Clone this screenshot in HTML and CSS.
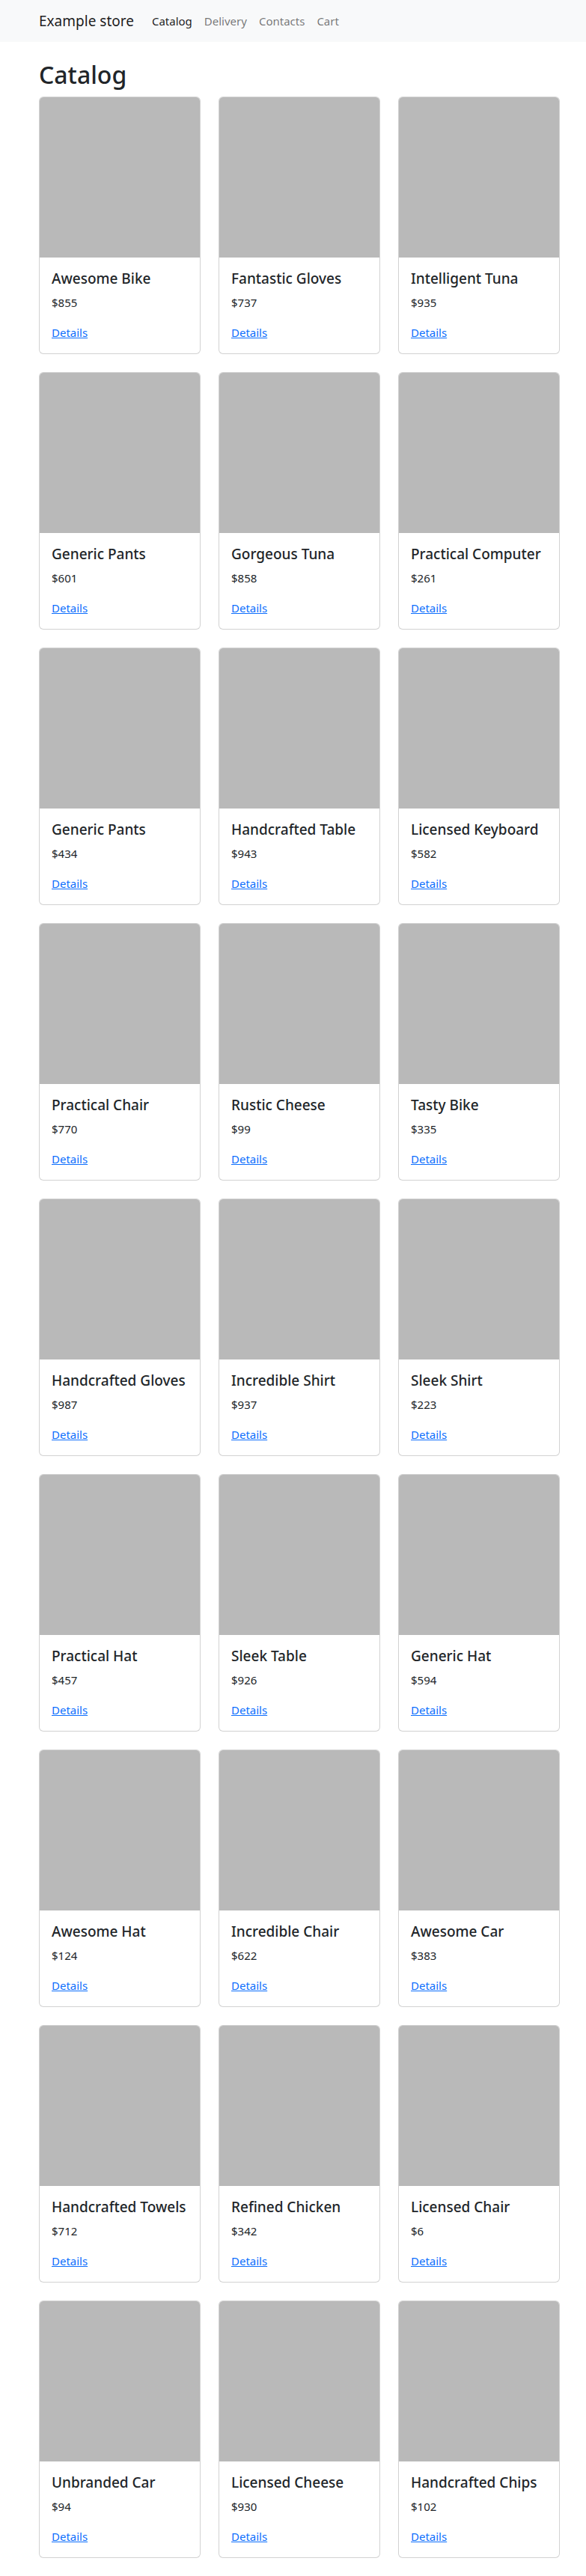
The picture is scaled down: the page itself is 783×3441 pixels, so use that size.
FILE: index.html
```html
<!DOCTYPE html>
<html lang="en">
<head>
<meta charset="utf-8">
<title>Example store</title>
<link rel="stylesheet" href="styles.css">
</head>
<body>
<nav class="navbar">
  <a class="brand" href="#">Example store</a>
  <ul class="nav">
    <li><a class="nav-link active" href="#">Catalog</a></li>
    <li><a class="nav-link" href="#">Delivery</a></li>
    <li><a class="nav-link" href="#">Contacts</a></li>
    <li><a class="nav-link" href="#">Cart</a></li>
  </ul>
</nav>
<main class="main">
  <h1 class="page-title">Catalog</h1>
  <div class="grid">
    <div class="card"><div class="card-img"></div><div class="card-body"><h5 class="card-title">Awesome Bike</h5><p class="card-text">$855</p><a class="card-link" href="#">Details</a></div></div>
    <div class="card"><div class="card-img"></div><div class="card-body"><h5 class="card-title">Fantastic Gloves</h5><p class="card-text">$737</p><a class="card-link" href="#">Details</a></div></div>
    <div class="card"><div class="card-img"></div><div class="card-body"><h5 class="card-title">Intelligent Tuna</h5><p class="card-text">$935</p><a class="card-link" href="#">Details</a></div></div>

    <div class="card"><div class="card-img"></div><div class="card-body"><h5 class="card-title">Generic Pants</h5><p class="card-text">$601</p><a class="card-link" href="#">Details</a></div></div>
    <div class="card"><div class="card-img"></div><div class="card-body"><h5 class="card-title">Gorgeous Tuna</h5><p class="card-text">$858</p><a class="card-link" href="#">Details</a></div></div>
    <div class="card"><div class="card-img"></div><div class="card-body"><h5 class="card-title">Practical Computer</h5><p class="card-text">$261</p><a class="card-link" href="#">Details</a></div></div>

    <div class="card"><div class="card-img"></div><div class="card-body"><h5 class="card-title">Generic Pants</h5><p class="card-text">$434</p><a class="card-link" href="#">Details</a></div></div>
    <div class="card"><div class="card-img"></div><div class="card-body"><h5 class="card-title">Handcrafted Table</h5><p class="card-text">$943</p><a class="card-link" href="#">Details</a></div></div>
    <div class="card"><div class="card-img"></div><div class="card-body"><h5 class="card-title">Licensed Keyboard</h5><p class="card-text">$582</p><a class="card-link" href="#">Details</a></div></div>

    <div class="card"><div class="card-img"></div><div class="card-body"><h5 class="card-title">Practical Chair</h5><p class="card-text">$770</p><a class="card-link" href="#">Details</a></div></div>
    <div class="card"><div class="card-img"></div><div class="card-body"><h5 class="card-title">Rustic Cheese</h5><p class="card-text">$99</p><a class="card-link" href="#">Details</a></div></div>
    <div class="card"><div class="card-img"></div><div class="card-body"><h5 class="card-title">Tasty Bike</h5><p class="card-text">$335</p><a class="card-link" href="#">Details</a></div></div>

    <div class="card"><div class="card-img"></div><div class="card-body"><h5 class="card-title">Handcrafted Gloves</h5><p class="card-text">$987</p><a class="card-link" href="#">Details</a></div></div>
    <div class="card"><div class="card-img"></div><div class="card-body"><h5 class="card-title">Incredible Shirt</h5><p class="card-text">$937</p><a class="card-link" href="#">Details</a></div></div>
    <div class="card"><div class="card-img"></div><div class="card-body"><h5 class="card-title">Sleek Shirt</h5><p class="card-text">$223</p><a class="card-link" href="#">Details</a></div></div>

    <div class="card"><div class="card-img"></div><div class="card-body"><h5 class="card-title">Practical Hat</h5><p class="card-text">$457</p><a class="card-link" href="#">Details</a></div></div>
    <div class="card"><div class="card-img"></div><div class="card-body"><h5 class="card-title">Sleek Table</h5><p class="card-text">$926</p><a class="card-link" href="#">Details</a></div></div>
    <div class="card"><div class="card-img"></div><div class="card-body"><h5 class="card-title">Generic Hat</h5><p class="card-text">$594</p><a class="card-link" href="#">Details</a></div></div>

    <div class="card"><div class="card-img"></div><div class="card-body"><h5 class="card-title">Awesome Hat</h5><p class="card-text">$124</p><a class="card-link" href="#">Details</a></div></div>
    <div class="card"><div class="card-img"></div><div class="card-body"><h5 class="card-title">Incredible Chair</h5><p class="card-text">$622</p><a class="card-link" href="#">Details</a></div></div>
    <div class="card"><div class="card-img"></div><div class="card-body"><h5 class="card-title">Awesome Car</h5><p class="card-text">$383</p><a class="card-link" href="#">Details</a></div></div>

    <div class="card"><div class="card-img"></div><div class="card-body"><h5 class="card-title">Handcrafted Towels</h5><p class="card-text">$712</p><a class="card-link" href="#">Details</a></div></div>
    <div class="card"><div class="card-img"></div><div class="card-body"><h5 class="card-title">Refined Chicken</h5><p class="card-text">$342</p><a class="card-link" href="#">Details</a></div></div>
    <div class="card"><div class="card-img"></div><div class="card-body"><h5 class="card-title">Licensed Chair</h5><p class="card-text">$6</p><a class="card-link" href="#">Details</a></div></div>

    <div class="card"><div class="card-img"></div><div class="card-body"><h5 class="card-title">Unbranded Car</h5><p class="card-text">$94</p><a class="card-link" href="#">Details</a></div></div>
    <div class="card"><div class="card-img"></div><div class="card-body"><h5 class="card-title">Licensed Cheese</h5><p class="card-text">$930</p><a class="card-link" href="#">Details</a></div></div>
    <div class="card"><div class="card-img"></div><div class="card-body"><h5 class="card-title">Handcrafted Chips</h5><p class="card-text">$102</p><a class="card-link" href="#">Details</a></div></div>
  </div>
</main>
</body>
</html>
```

FILE: styles.css
```css
* { box-sizing: border-box; }

html, body {
  margin: 0;
  padding: 0;
  background: #fff;
}

body {
  font-family: "Noto Sans", "Open Sans", Arial, sans-serif;
  font-size: 16px;
  line-height: 1.5;
  color: #212529;
}

.navbar {
  height: 56px;
  background: #f8f9fa;
  display: flex;
  align-items: center;
  padding-left: 52px;
}

.brand {
  font-size: 19px;
  line-height: 30px;
  color: rgba(0, 0, 0, 0.9);
  text-decoration: none;
  margin-right: 16px;
}

.nav {
  display: flex;
  list-style: none;
  margin: 0;
  padding: 0;
}

.nav-link {
  display: block;
  padding: 8px 8px;
  font-size: 15px;
  line-height: 24px;
  color: rgba(0, 0, 0, 0.55);
  text-decoration: none;
}

.nav-link.active {
  color: rgba(0, 0, 0, 0.9);
}

.main {
  padding: 24px 35px 25px 52px;
}

.page-title {
  margin: 0 0 9px;
  font-size: 32px;
  line-height: 40px;
  font-weight: 500;
}

.grid {
  display: grid;
  grid-template-columns: repeat(3, 216px);
  gap: 24px;
}

.card {
  display: flex;
  flex-direction: column;
  border: 1px solid rgba(0, 0, 0, 0.175);
  border-radius: 6px;
  overflow: hidden;
  background: #fff;
}

.card-img {
  height: 214px;
  background: #b9b9b9;
}

.card-body {
  padding: 16px;
}

.card-title {
  margin: 0 0 8px;
  font-size: 19px;
  line-height: 24px;
  font-weight: 500;
}

.card-text {
  margin: 0 0 16px;
  font-size: 15px;
  line-height: 24px;
}

.card-link {
  display: inline-block;
  font-size: 15px;
  line-height: 24px;
  color: #0d6efd;
  text-decoration: underline;
}
```
